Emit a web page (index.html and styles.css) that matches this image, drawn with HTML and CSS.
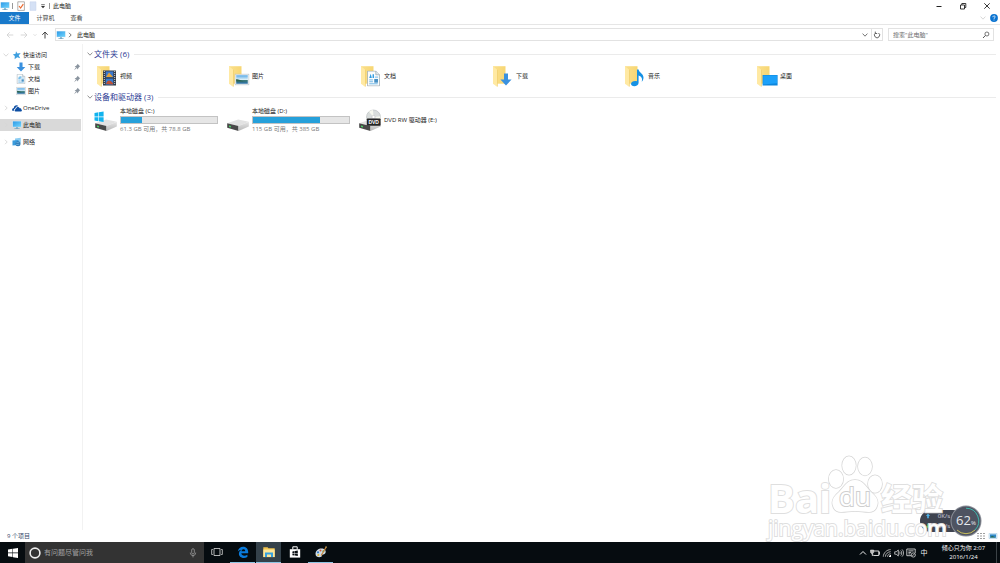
FILE: index.html
```html
<!DOCTYPE html>
<html lang="zh-CN">
<head>
<meta charset="utf-8">
<title>此电脑</title>
<link rel="stylesheet" href="styles.css">
</head>
<body>
<svg class="defs" aria-hidden="true">
  <defs>
    <linearGradient id="gFolder" x1="0" y1="0" x2="1" y2="0"><stop offset="0" stop-color="#fbe08c"/><stop offset="1" stop-color="#f7d673"/></linearGradient>
    <linearGradient id="gScreen" x1="0" y1="0" x2="1" y2="1"><stop offset="0" stop-color="#2f9be8"/><stop offset="1" stop-color="#6fd3fb"/></linearGradient>
    <linearGradient id="gSky" x1="0" y1="0" x2="0" y2="1"><stop offset="0" stop-color="#58a9e6"/><stop offset=".5" stop-color="#d9eef8"/><stop offset=".6" stop-color="#3c7a78"/><stop offset="1" stop-color="#2b6fa8"/></linearGradient>
    <linearGradient id="gDrive" x1="0" y1="0" x2="0" y2="1"><stop offset="0" stop-color="#e6e6e6"/><stop offset="1" stop-color="#b8b8b8"/></linearGradient>
    <symbol id="chev" viewBox="0 0 6 6"><path d="M.6 1.6 3 4.2 5.4 1.6" fill="none" stroke="currentColor" stroke-width=".9"/></symbol>
    <symbol id="chevR" viewBox="0 0 6 6"><path d="M2 .8 4.2 3 2 5.2" fill="none" stroke="currentColor" stroke-width=".9"/></symbol>
    <symbol id="pin" viewBox="0 0 8 8"><path d="M4.6.8 7.2 3.4 6.4 3.8 5.2 5.2 5 6.6 1.6 3.1 3 2.9 4.3 1.6ZM2.8 4.6 3.5 5.3 1 7.2Z" fill="#8a949f"/></symbol>
    <symbol id="pc" viewBox="0 0 10 10"><rect x=".4" y="1" width="9.2" height="6.2" fill="#d3e6f2"/><rect x=".9" y="1.4" width="8.2" height="5.4" fill="url(#gScreen)"/><path d="M4 7.2h2v1h1.6v.9H2.4v-.9H4Z" fill="#7aa9c4"/></symbol>
    <symbol id="doc" viewBox="0 0 14 17"><path d="M.5.5h9l4 4v12H.5Z" fill="#fafcfd" stroke="#9aa7af" stroke-width=".8"/><path d="M9.5.5v4h4" fill="#dfe7eb" stroke="#9aa7af" stroke-width=".8"/><path d="M2.4 8 4 3.5 5.2 8ZM6 4h1.5v4H6Z" fill="#2e9be0"/><path d="M8.5 7h3.5M2.4 10h4M2.4 12h4M2.4 14.2h9.2" stroke="#69b2e4"/><rect x="7.8" y="9" width="4" height="4" fill="#4690c4"/></symbol>
    <symbol id="pic" viewBox="0 0 14 11"><path d="M.5.5h13v10H.5Z" fill="#fff" stroke="#b0bac0" stroke-width=".7"/><path d="M1.6 1.6h10.8v7.8H1.6Z" fill="url(#gSky)"/><path d="M1.6 5 4.5 5.7 8 7.1 12.4 7.4H1.6Z" fill="#2c6350"/></symbol>
    <symbol id="arrow" viewBox="0 0 12 13"><path d="M4 .5h4v6h3.6L6 12.5.4 6.5H4Z" fill="#3a91df"/></symbol>
    <symbol id="folder" viewBox="0 0 24 24"><path d="M3 2.2h12.5v17.5H3Z" fill="url(#gFolder)"/><path d="M3 2.2 7 5.6v17.2L3 19.8Z" fill="#ffe9a3"/><path d="M7 5.6v17.2l.7-.4V6Z" fill="#f0cf70"/></symbol>
    <symbol id="drive" viewBox="0 0 24 24"><path d="M1.2 15.3 12.2 11.6 22.8 13.7 12.5 18Z" fill="#e2e2e2"/><path d="M1.2 15.3 12.5 18V23L1.2 19.8Z" fill="#494949"/><path d="M12.5 18 22.8 13.7v4.8L12.5 23Z" fill="url(#gDrive)"/><path d="M3 17.4 5 17.9v1.6L3 19Z" fill="#48cf65"/></symbol>
    <symbol id="win" viewBox="0 0 10 10"><path d="M0 1.5 4.5.8v3.8H0ZM5 .7 10 0v4.6H5ZM0 5.2h4.5V9L0 8.3ZM5 5.2h5V10L5 9.2Z" fill="currentColor"/></symbol>
  </defs>
</svg>

<div class="window">
  <header class="titlebar">
    <svg class="i10" viewBox="0 0 10 10"><use href="#pc"/></svg>
    <span class="rule"></span>
    <button class="tool" aria-label="属性"><svg class="i10" viewBox="0 0 10 10"><path d="M1.8.8h6.6v8.6H1.8Z" fill="#fff" stroke="#a09c99" stroke-width=".8"/><path d="m3 5 1.6 2 2.7-3.8" fill="none" stroke="#ec6b32" stroke-width="1.2"/></svg></button>
    <button class="tool" aria-label="新建文件夹"><svg class="i10" viewBox="0 0 10 10"><path d="M2 .8h6v8.6H2Z" fill="#d5e1f5" stroke="#c5d3ea" stroke-width=".5"/></svg></button>
    <button class="tool narrow" aria-label="自定义"><svg class="i6" viewBox="0 0 6 6"><path d="M1.2 1.7h3.6" stroke="#333" stroke-width=".7"/><path d="M1 3h4L3 5.2Z" fill="#333"/></svg></button>
    <span class="rule"></span>
    <h1 class="title">此电脑</h1>
    <div class="wincontrols">
      <button aria-label="最小化"><svg class="i8" viewBox="0 0 8 8"><path d="M1.5 4.5h5" stroke="#222"/></svg></button>
      <button aria-label="还原"><svg class="i8" viewBox="0 0 8 8"><path d="M1.5 3h4v4h-4ZM2.8 3V1.5h4v4H5.5" fill="none" stroke="#222" stroke-width=".9"/></svg></button>
      <button aria-label="关闭"><svg class="i8" viewBox="0 0 8 8"><path d="m1.3 1.3 5.4 5.4m0-5.4L1.3 6.7" stroke="#222" stroke-width=".9"/></svg></button>
    </div>
  </header>

  <nav class="ribbon" aria-label="功能区">
    <button class="tab file">文件</button>
    <button class="tab">计算机</button>
    <button class="tab">查看</button>
    <div class="help">
      <button class="pale" aria-label="展开功能区"><svg class="i6"><use href="#chev"/></svg></button>
      <button aria-label="帮助"><svg class="i8" viewBox="0 0 8 8"><circle cx="4" cy="4" r="3.9" fill="#0b74d1"/><path d="M2.9 3.2C2.8 1.5 5.3 1.6 5.2 3 5.1 3.8 4 3.8 4 4.9M4 5.6v.8" fill="none" stroke="#fff" stroke-width=".8"/></svg></button>
    </div>
  </nav>

  <div class="addressrow">
    <div class="arrows">
      <button class="pale" aria-label="后退"><svg class="i8" viewBox="0 0 8 8"><path d="M7.3 4H1m2.7-2.7L1 4l2.7 2.7" fill="none" stroke="currentColor" stroke-width=".9"/></svg></button>
      <button class="pale" aria-label="前进"><svg class="i8" viewBox="0 0 8 8"><path d="M.7 4H7M4.3 1.3 7 4 4.3 6.7" fill="none" stroke="currentColor" stroke-width=".9"/></svg></button>
      <button class="pale small" aria-label="历史"><svg class="i4"><use href="#chev"/></svg></button>
      <button class="upward" aria-label="上移"><svg class="i8" viewBox="0 0 8 8"><path d="M4 7.5V1M1.3 3.8 4 1l2.7 2.8" fill="none" stroke="#444" stroke-width="1"/></svg></button>
    </div>
    <div class="address">
      <svg class="i10" viewBox="0 0 10 10"><use href="#pc"/></svg>
      <svg class="i6 dim"><use href="#chevR"/></svg>
      <span class="path">此电脑</span>
      <button class="dim" aria-label="以前的位置"><svg class="i6"><use href="#chev"/></svg></button>
      <button class="refresh" aria-label="刷新"><svg class="i8" viewBox="0 0 8 8"><path d="M5.5 2A2.6 2.6 0 1 1 2.6 2M2.3.6v1.9h1.9" fill="none" stroke="#555" stroke-width=".9"/></svg></button>
    </div>
    <div class="searchbox">
      <input type="text" placeholder="搜索&quot;此电脑&quot;" aria-label="搜索此电脑">
      <svg class="i8" viewBox="0 0 8 8"><circle cx="4.9" cy="3" r="2" fill="none" stroke="#555" stroke-width=".8"/><path d="M3.5 4.4 1 7" stroke="#555" stroke-width="1"/></svg>
    </div>
  </div>

  <div class="body">
    <nav class="sidebar" aria-label="导航">
      <div class="group">
        <a class="node" href="#"><svg class="i6 twist"><use href="#chev"/></svg><svg class="i10" viewBox="0 0 10 10"><path d="m4 1.3 1.4 2.1 3.3-.3-2 2.3 1.5 2.8-3-1L2.6 9.3 2.8 6 .8 4.4l2.8-.7Z" fill="#3e9fdf"/></svg><span>快速访问</span></a>
        <a class="node sub" href="#"><svg class="i10"><use href="#arrow"/></svg><span>下载</span><svg class="i8 pin"><use href="#pin"/></svg></a>
        <a class="node sub" href="#"><svg class="i10"><use href="#doc"/></svg><span>文档</span><svg class="i8 pin"><use href="#pin"/></svg></a>
        <a class="node sub" href="#"><svg class="i10"><use href="#pic"/></svg><span>图片</span><svg class="i8 pin"><use href="#pin"/></svg></a>
      </div>
      <a class="node" href="#"><svg class="i6 twist"><use href="#chevR"/></svg><svg class="i10" viewBox="0 0 10 10"><path d="M.3 7.8C-.3 6 .8 5.2 1.8 5 1.9 2.4 5 1.2 6.6 3.4 4.6 3.2 3.6 4.2 3.4 5.4 2 5.6 1.6 6.8 2.2 7.8Z" fill="#0d4ea3"/><path d="M3.6 8.5C2.2 8.2 2.4 6.2 4 6 4.2 3.8 7 3.4 7.7 5.2 9 5 9.6 6 9.4 6.7c1 .6.5 1.8-.4 1.8Z" fill="#0d4ea3"/></svg><span>OneDrive</span></a>
      <a class="node selected" href="#" aria-current="page"><svg class="i6 twist"><use href="#chevR"/></svg><svg class="i10"><use href="#pc"/></svg><span>此电脑</span></a>
      <a class="node" href="#"><svg class="i6 twist"><use href="#chevR"/></svg><svg class="i10" viewBox="0 0 10 10"><path d="m3 1.6 5.8-.8v5L3 6.6Z" fill="#8dcdf2"/><path d="m.5 3.6 6-.7v5l-6 .6Z" fill="#3a9bdc"/><circle cx="6" cy="6.7" r="2.5" fill="#2a77b5"/><path d="m4.4 5.6 3 .2M4 7.3l3.4.5" stroke="#8dcdf2" stroke-width=".6"/></svg><span>网络</span></a>
    </nav>

    <main class="content">
      <section>
        <h2 class="heading"><svg class="i6"><use href="#chev"/></svg>文件夹 (6)</h2>
        <div class="tiles">
          <a class="tile" href="#"><svg class="i24" viewBox="0 0 24 24"><use href="#folder"/><rect x="9" y="6.5" width="13" height="15" fill="#353b44"/><path d="M10.3 7v14M20.7 7v14" stroke="#d0d4d8" stroke-width="1" stroke-dasharray="1 1"/><rect x="11.7" y="7.4" width="7.6" height="6" fill="#3a78cf"/><path d="m12 13 3-4.5 4 4.5Z" fill="#e3a33a"/><rect x="11.7" y="14.6" width="7.6" height="6" fill="#347cd3"/><path d="M12 20c2-6 5-3 7-1v1.5Z" fill="#bb5036"/></svg><span>视频</span></a>
          <a class="tile" href="#"><svg class="i24" viewBox="0 0 24 24"><use href="#folder"/><use href="#pic" x="8.5" y="9.5" width="15" height="12"/></svg><span>图片</span></a>
          <a class="tile" href="#"><svg class="i24" viewBox="0 0 24 24"><use href="#folder"/><use href="#doc" x="9" y="6.5" width="13" height="16"/></svg><span>文档</span></a>
          <a class="tile" href="#"><svg class="i24" viewBox="0 0 24 24"><use href="#folder"/><use href="#arrow" x="9.5" y="9" width="13" height="13"/></svg><span>下载</span></a>
          <a class="tile" href="#"><svg class="i24" viewBox="0 0 24 24"><use href="#folder"/><path d="M15 5.5h1.6c.2 3 4.9 4 4.9 8 0 2-.7 3.2-1.8 4.3.9-3.1.2-5.2-3.1-6.3v7.2c0 2.1-2 3.5-4.3 3.5-2 0-3.3-1-3.3-2.4 0-2 3.2-3.6 6-2.6Z" fill="#1591e4"/></svg><span>音乐</span></a>
          <a class="tile" href="#"><svg class="i24" viewBox="0 0 24 24"><use href="#folder"/><rect x="8.6" y="11" width="15" height="10.5" fill="#0d86dc"/><path d="M9.2 11.6h13.8v7.6L9.2 20.6Z" fill="#1ca1fa"/></svg><span>桌面</span></a>
        </div>
      </section>
      <section>
        <h2 class="heading"><svg class="i6"><use href="#chev"/></svg>设备和驱动器 (3)</h2>
        <div class="tiles drives">
          <a class="tile" href="#"><svg class="i24" viewBox="0 0 24 24"><use href="#drive"/><path d="M.5 5 4.4 4.3v4.2H.5ZM5 4.2l4.6-.7v5H5ZM.5 9.2h3.9v4L.5 12.6ZM5 9.2h4.6V14L5 13.3Z" fill="#12b3ee"/></svg><span class="drive"><span>本地磁盘 (C:)</span><span class="bar"><span class="fill" style="width:22%"></span></span><span class="free">61.3 GB 可用，共 78.8 GB</span></span></a>
          <a class="tile" href="#"><svg class="i24"><use href="#drive"/></svg><span class="drive"><span>本地磁盘 (D:)</span><span class="bar"><span class="fill" style="width:70%"></span></span><span class="free">115 GB 可用，共 385 GB</span></span></a>
          <a class="tile" href="#"><svg class="i24" viewBox="0 0 24 24"><use href="#drive"/><circle cx="15.5" cy="9" r="7" fill="#d9dddc" stroke="#b4b9ba" stroke-width=".6"/><path d="M15.5 9 11 3.7a7 7 0 0 1 4-1.6ZM15.5 9l6.5 2.8a7 7 0 0 0 .4-3.5Z" fill="#f6f8ee"/><circle cx="15.5" cy="9" r="1.6" fill="#fff" stroke="#bbb" stroke-width=".5"/><rect x="8.8" y="10.5" width="13.8" height="7.2" rx=".8" fill="#252525"/><text x="15.7" y="15.9" text-anchor="middle" class="dvd">DVD</text></svg><span>DVD RW 驱动器 (E:)</span></a>
        </div>
      </section>
    </main>
  </div>

  <footer class="status">
    <span>9 个项目</span>
    <div class="views">
      <button aria-label="详细信息"><svg class="i10" viewBox="0 0 10 10"><path d="M1 2.5h2m1 0h2m1 0h2M1 5h2m1 0h2m1 0h2M1 7.5h2m1 0h2m1 0h2" stroke="#888" stroke-width=".8"/></svg></button>
      <button aria-label="大图标"><svg class="i10" viewBox="0 0 10 10"><path d="M1 2.5h8v5H1Z" fill="#d8eefb" stroke="#b5d3e8" stroke-width=".7"/><path d="M2 3.4h6v3.2H2Z" fill="#2f88c8"/><path d="m2 6.6 2-1.8 4 1.8Z" fill="#286a54"/></svg></button>
    </div>
  </footer>

  <footer class="taskbar">
    <button class="start" aria-label="开始"><svg class="i10"><use href="#win"/></svg></button>
    <label class="cortana">
      <svg class="i12" viewBox="0 0 12 12"><circle cx="6" cy="6" r="4.9" fill="none" stroke="#ededed" stroke-width="1.6"/></svg>
      <input type="text" placeholder="有问题尽管问我" aria-label="有问题尽管问我">
      <svg class="i10" viewBox="0 0 10 10"><rect x="3.7" y=".7" width="2.6" height="5.3" rx="1.3" fill="none" stroke="#aaa" stroke-width=".7"/><path d="M2.3 4.6c0 4 5.4 4 5.4 0M5 7.6v1.8" fill="none" stroke="#aaa" stroke-width=".7"/></svg>
    </label>
    <div class="apps">
      <button aria-label="任务视图"><svg class="i12" viewBox="0 0 12 12"><path d="M3 2.5h6v7H3ZM1.8 3.5H.7v5h1.1M10.2 3.5h1.1v5h-1.1" fill="none" stroke="#ddd" stroke-width=".8"/></svg></button>
      <button class="open" aria-label="Edge"><svg class="i12" viewBox="0 0 12 12"><path d="M.8 5.4C1.5-.9 11.2-1.1 11.2 6.1v1.2H4.3c.1 2.7 3.9 3 6.1 1.5v2.3C6.7 13 1.9 11.6 1.9 7.7c0-1.8 1.1-3.3 2.6-4C3 3.8 1.7 4.4.8 5.4ZM4.5 5.2h3.7c0-2.5-3.2-2.4-3.7 0Z" fill="#0a7bdc" fill-rule="evenodd"/></svg></button>
      <button class="open active" aria-label="文件资源管理器"><svg class="i12" viewBox="0 0 12 12"><path d="M.3 1.3h4.3l.8 1h6.3v8.8H.3Z" fill="#f0c44e"/><path d="M.3 3.5h11.4v7.6H.3Z" fill="#fde69a"/><path d="M2 11.1V6.4h8v4.7H8V8.5H4v2.6Z" fill="#37a2df"/></svg></button>
      <button aria-label="应用商店"><svg class="i12" viewBox="0 0 12 12"><path d="M3.8 3.3V.8h4.4v2.5" fill="none" stroke="#fff"/><path d="M.8 3.2h10.4v8.4H.8Z" fill="#fff"/><path d="m3.4 5.4 2.2-.3v2H3.4ZM6 5l2.8-.4v2.5H6ZM3.4 7.5h2.2v2l-2.2-.3ZM6 7.5h2.8V10L6 9.6Z" fill="#080d12"/></svg></button>
      <button class="open" aria-label="画图"><svg class="i12" viewBox="0 0 12 12"><path d="M.5 8C.5 4 4.8 1.9 8.3 2.8c3.2 1 3 4.8.8 5.4-1.4.3-1.7 0-2 1.3C6.8 12 .5 11.9.5 8Z" fill="#cfdde7"/><circle cx="3" cy="6.3" r="1.1" fill="#3479c5"/><circle cx="5.5" cy="4.4" r="1" fill="#d0543d"/><circle cx="8.4" cy="5.2" r="1" fill="#4b9f48"/><circle cx="3.3" cy="9" r="1.1" fill="#e1b335"/><path d="m5.6 9.3 4.8-8 1 .6-5 8Z" fill="#c98336"/><path d="m10.2 1.5.5-1.3 1 .3-.1 1.6Z" fill="#edbd65"/></svg></button>
    </div>
    <div class="tray">
      <button aria-label="显示隐藏的图标"><svg class="i8" viewBox="0 0 8 8"><path d="m1 5.5 3-3 3 3" fill="none" stroke="#eee"/></svg></button>
      <button aria-label="电池"><svg class="i10" viewBox="0 0 10 10"><path d="M3.2 3h5.6v4.5H4M8.8 4.2h.9v2h-.9" fill="none" stroke="#eee" stroke-width=".9"/><path d="M.5 2h3.2v2c0 1.3-1 1.5-1.6 1.5S.5 5 .5 4ZM2.1 5v2.5H4" fill="#bbb" stroke="#eee" stroke-width=".5"/></svg></button>
      <button aria-label="网络"><svg class="i10" viewBox="0 0 10 10"><path d="M1.3 8.7C1.3 5 4.8 1.6 8.7 1.6M3.4 8.7c0-2.7 2.6-5 5.3-5M5.5 8.7c0-1.6 1.6-3 3.2-3" fill="none" stroke="#bbb" stroke-width=".9"/><path d="M7 8.9h2V6.7c-1 0-2 1-2 2.2Z" fill="#fff"/></svg></button>
      <button aria-label="音量"><svg class="i10" viewBox="0 0 10 10"><path d="M.7 3.8h1.5L4.3 2v6L2.2 6.2H.7ZM5.4 3.6c.8.8.8 2 0 2.8M6.7 2.5c1.4 1.4 1.4 3.6 0 5M8 1.4c2 2 2 5.2 0 7.2" fill="none" stroke="#eee" stroke-width=".7"/></svg></button>
      <button aria-label="通知"><svg class="i10" viewBox="0 0 10 10"><path d="M5 7.7H.8V1h8.4v4M2.4 2.9h5.2M2.4 4.4h2.8M2.4 5.9h2" fill="none" stroke="#eee" stroke-width=".8"/><circle cx="7.3" cy="7" r="2.1" fill="none" stroke="#eee" stroke-width=".7"/><path d="m6 8.3 2.6-2.6" stroke="#eee" stroke-width=".7"/></svg></button>
      <button class="ime">中</button>
      <div class="clock"><span>倾心只为你 2:07</span><time datetime="2016-01-24">2016/1/24</time></div>
    </div>
  </footer>
</div>

<div class="monitor">
  <span class="speed"><svg class="i6" viewBox="0 0 6 6"><path d="M3 .5 5 3H3.8v2.3H2.2V3H1Z" fill="#4eb3ea"/></svg><span>0K/s</span></span>
  <span class="speed"><svg class="i6" viewBox="0 0 6 6"><path d="M3 5.5 1 3h1.2V.7h1.6V3H5Z" fill="#58c34b"/></svg><span>0K/s</span></span>
</div>
<div class="watermark" aria-hidden="true">
  <div class="brand">
    <span class="bai">Bai</span>
    <svg class="paw" viewBox="0 0 56 58"><g fill="#fff" stroke="#d6d6d6" stroke-width="1.5"><ellipse cx="9" cy="24" rx="7.2" ry="9"/><ellipse cx="22" cy="10.5" rx="6.8" ry="9.2"/><ellipse cx="38" cy="11.5" rx="7" ry="9"/><ellipse cx="48" cy="29" rx="7" ry="8.8"/><path d="M28 25c8 0 10 6 16 12 6 5 8 9 6 14-1 4-4 6-8 6-5 0-9-1-14-1s-9 1-14 1c-4 0-7-2-8-6-2-5 0-9 6-14 6-6 8-12 16-12Z"/></g><text x="28" y="51" text-anchor="middle" class="du">du</text></svg>
    <span class="exp">经验</span>
  </div>
  <div class="url">jingyan.baidu.com</div>
</div>
<div class="gauge">
  <svg class="ring" viewBox="0 0 32 32"><circle cx="16" cy="16" r="15.5" fill="#8b8f98"/><circle cx="16" cy="16" r="14.5" fill="#4e5361"/><path d="M16 3.2A12.8 12.8 0 0 1 25 25" fill="none" stroke="#3fb8ae" stroke-width="1"/><path d="M25 25a12.8 12.8 0 0 1-18 0" fill="none" stroke="#c9bf5a" stroke-width="1"/></svg>
  <span class="percent">62<small>%</small></span>
</div>
</body>
</html>
```
FILE: styles.css
```css
* { box-sizing: border-box; }
html, body { height: 100%; margin: 0; }
body {
  position: relative;
  overflow: hidden;
  background: #fff;
  color: #1c1c1c;
  font: 6px/8px "Open Sans", "Noto Sans CJK SC", sans-serif;
}
button, input { font: inherit; color: inherit; border: 0; padding: 0; margin: 0; background: none; min-width: 0; }
button { display: flex; align-items: center; justify-content: center; }
input:focus { outline: none; }
a { color: inherit; text-decoration: none; }
h1, h2 { margin: 0; font-size: inherit; font-weight: normal; }
svg { flex: none; display: block; }
.defs { position: absolute; width: 0; height: 0; }
.i4 { width: 4px; height: 4px; }
.i6 { width: 6px; height: 6px; }
.i8 { width: 8px; height: 8px; }
.i10 { width: 10px; height: 10px; }
.i12 { width: 12px; height: 12px; }
.i24 { width: 24px; height: 24px; }
.pale { color: #d2d2d2; }
.dim { color: #666; }

.window { height: 100%; display: flex; flex-direction: column; }

/* Title bar */
.titlebar { display: flex; align-items: center; height: 12px; }
.titlebar .rule { width: 1px; height: 6px; margin: 0 2px; background: #999; }
.tool { width: 12px; }
.tool.narrow { width: 8px; }
.title { padding-left: 1px; }
.wincontrols { display: flex; margin-left: auto; padding-right: 1px; }
.wincontrols button { width: 24px; height: 12px; }

/* Ribbon tabs */
.ribbon { display: flex; align-items: center; height: 13px; border-bottom: 1px solid #e6e6e6; }
.tab { height: 12px; width: 31px; color: #444; }
.tab.file { width: 29px; margin-right: 1px; background: #1979ca; color: #fff; }
.help { display: flex; gap: 4px; margin-left: auto; padding-right: 2px; }

/* Address bar */
.addressrow { display: flex; align-items: center; gap: 5px; height: 19px; padding-right: 6px; }
.arrows { display: flex; align-items: center; width: 50px; padding-left: 3px; }
.arrows button { width: 15px; height: 12px; }
.arrows button.small { width: 9px; }
.arrows button.upward { width: 11px; }
.address { flex: 1; display: flex; align-items: center; gap: 1px; height: 13px; border: 1px solid #e2e2e2; }
.path { flex: 1; padding-left: 3px; }
.address button { width: 10px; height: 11px; }
.address .refresh { width: 11px; border-left: 1px solid #e2e2e2; }
.searchbox { display: flex; align-items: center; width: 106px; height: 13px; border: 1px solid #e2e2e2; padding: 0 3px 0 4px; }
.searchbox input { flex: 1; height: 10px; }
.searchbox input::placeholder { color: #6c6c6c; opacity: 1; }

/* Navigation tree */
.body { flex: 1; display: flex; min-height: 0; }
.sidebar { width: 83px; padding-top: 5px; display: flex; flex-direction: column; gap: 5px; border-right: 1px solid #f2f2f2; }
.node { display: flex; align-items: center; height: 12px; padding-left: 3px; gap: 1px; margin-right: 1px; }
.node .twist { color: #d6d6d6; margin-right: 2px; }
.node.sub { padding-left: 16px; gap: 2px; }
.node.selected { background: #d9d9d9; }
.node .pin { margin-left: auto; }

/* Content */
.content { flex: 1; padding: 4px 4px 0; }
.heading { display: flex; align-items: center; gap: 1px; height: 12px; font-size: 8px; color: #2d3b93; }
.heading svg { color: #888; }
.heading::after { content: ""; flex: 1; height: 1px; margin-left: 4px; background: #ebebeb; }
.tiles { display: grid; grid-template-columns: repeat(auto-fill, 132px); padding-left: 7px; }
.tile { display: flex; align-items: center; gap: 2px; height: 31px; }
.drives .tile { height: 34px; }
.drive { display: flex; flex-direction: column; gap: 1px; width: 98px; }
.bar { display: block; height: 8px; background: #e6e6e6; border: 1px solid #c3c3c3; }
.fill { display: block; height: 100%; background: #26a0da; }
.free { color: #777; white-space: nowrap; }
.dvd { font: bold 5px "Liberation Sans", sans-serif; fill: #fff; }

/* Status bar */
.status { display: flex; align-items: center; justify-content: space-between; height: 12px; padding: 0 2px 0 7px; color: #35496a; }
.views { display: flex; gap: 2px; }

/* Taskbar */
.taskbar { display: flex; height: 21px; background: #060c10; color: #eee; }
.start { width: 25px; color: #fff; }
.cortana { display: flex; align-items: center; width: 179px; padding: 0 6px 0 4px; background: #333; font-size: 7px; }
.cortana input { flex: 1; padding-left: 3px; height: 12px; }
.cortana input::placeholder { color: #a2a2a2; opacity: 1; }
.apps { display: flex; gap: 1px; }
.apps button { width: 25px; border-bottom: 1px solid transparent; }
.apps .open { border-bottom-color: #8cc4e2; }
.apps .active { background: #34414a; }
.tray { display: flex; margin-left: auto; padding-right: 3px; }
.tray button { width: 12px; }
.tray .ime { width: 14px; font-size: 7px; }
.clock { display: flex; flex-direction: column; align-items: center; justify-content: center; width: 66px; line-height: 9px; border-right: 1px solid #3b4246; color: #fff; }

/* Network and memory monitor floating over the desktop */
.monitor { position: absolute; right: 36px; bottom: 31px; width: 44px; height: 22px; padding: 2px 14px 2px 5px; border-radius: 11px; background: #3f4450; color: #d8dae0; display: flex; flex-direction: column; justify-content: space-between; }
.speed { display: flex; align-items: center; justify-content: space-between; }
.gauge { position: absolute; right: 18px; bottom: 26px; width: 32px; height: 32px; display: grid; place-items: center; }
.gauge > * { grid-area: 1 / 1; }
.ring { width: 32px; height: 32px; }
.percent { font: 13px/16px "Open Sans", sans-serif; color: #e6e8ec; }
.percent small { font-size: 6px; }

/* Watermark */
.watermark { position: absolute; right: 54px; bottom: 22px; width: 178px; color: #fff; font-family: "Open Sans", "Noto Sans CJK SC", sans-serif; -webkit-text-stroke: 2px #dfdfdf; paint-order: stroke fill; white-space: nowrap; }
.brand { display: flex; align-items: flex-end; height: 60px; }
.bai { width: 62px; font-size: 40px; line-height: 34px; font-weight: bold; }
.paw { width: 56px; height: 58px; margin: 0 -2px 2px -3px; }
.du { font: 26px "Open Sans", sans-serif; fill: #fff; stroke: #cfcfcf; stroke-width: 2px; paint-order: stroke fill; }
.exp { font-size: 31px; line-height: 34px; font-weight: bold; }
.url { font-size: 21px; line-height: 26px; }
```
